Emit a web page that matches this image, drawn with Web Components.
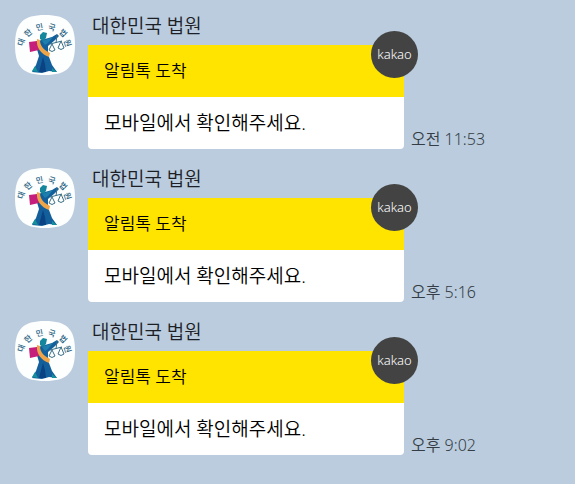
<!DOCTYPE html>
<html lang="ko">
<head>
<meta charset="utf-8">
<meta name="viewport" content="width=device-width, initial-scale=1">
<title>대한민국 법원</title>
<style>
body { margin: 0; background: #baccdd; color: #1c2026; font-family: "Noto Sans", "Noto Sans CJK KR", sans-serif; font-weight: 350; }
</style>
</head>
<body>
<chat-log>
  <chat-message sender="대한민국 법원" time="오전 11:53">
    <notice-card><span slot="heading">알림톡 도착</span>모바일에서 확인해주세요.</notice-card>
  </chat-message>
  <chat-message sender="대한민국 법원" time="오후 5:16">
    <notice-card><span slot="heading">알림톡 도착</span>모바일에서 확인해주세요.</notice-card>
  </chat-message>
  <chat-message sender="대한민국 법원" time="오후 9:02">
    <notice-card><span slot="heading">알림톡 도착</span>모바일에서 확인해주세요.</notice-card>
  </chat-message>
</chat-log>
<script>
function define(name, html, setup) {
  const template = document.createElement('template');
  template.innerHTML = html;
  customElements.define(name, class extends HTMLElement {
    constructor() {
      super();
      this.attachShadow({ mode: 'open' }).append(template.content.cloneNode(true));
    }
    connectedCallback() { if (setup) setup(this); }
  });
}

define('court-avatar', `
<style>
:host { display: block; width: 60px; height: 60px; }
svg { display: block; overflow: visible; }
text { font-size: 8px; font-weight: 500; fill: #24607f; text-anchor: middle; }
</style>
<svg width="60" height="60" viewBox="0 0 60 60" aria-hidden="true">
  <path d="M30 0C52 0 60 8 60 30S52 60 30 60 0 52 0 30 8 0 30 0Z" fill="#fdfefe"/>
  <text transform="translate(9 28) rotate(-72)">대</text>
  <text transform="translate(15 20) rotate(-42)">한</text>
  <text transform="translate(25 15) rotate(-12)">민</text>
  <text transform="translate(36 15) rotate(17)">국</text>
  <text transform="translate(46 20) rotate(45)">법</text>
  <text transform="translate(50 29) rotate(72)">원</text>
  <path d="M23 26 30 24 37 22 42 19 44 21 39 26 33 31 33 36 34 42 37 50 42 57 34 56 27 58 17 57 21 50 24 41 21 31Z" fill="#125f9b"/>
  <path d="M27 26 38 22 33 28 30 30Z" fill="#1f7fac"/>
  <path d="M28 42 24 57 31 57 30 49Z" fill="#0b4283"/>
  <path d="M25 20 28 17 32 18 31 23 28 26 25 24Z" fill="#15879d"/>
  <path d="M14 27 22 26 24 35 15 37Z" fill="#c51e7b"/>
  <path d="M22 24 25 25C25 31 29 35 35 38L34 42C26 39 21 33 22 24Z" fill="#efa448"/>
  <path d="M17 56 20 51 23 57M37 53 42 57 37 57Z" fill="#148f9b"/>
  <g fill="none" stroke="#397087" stroke-width="1">
    <path d="M42 20 41 28M35 29 47 26M37 29 34 35M37 29 40 35M46 26 43 33M46 26 49 33"/>
    <path d="M34 35Q37 38 40 35M43 33Q46 36 49 33"/>
  </g>
</svg>`);

define('kakao-badge', `
<style>
:host { display: grid; place-items: center; width: 47px; height: 47px; border-radius: 50%; background: #434343; color: #fff; font: 350 13px/20px "Noto Sans", sans-serif; }
span { padding-bottom: 2px; }
</style>
<span>kakao</span>`);

define('notice-card', `
<style>
:host { display: block; position: relative; flex: 0 1 316px; min-width: 0; border-radius: 4px; background: #fff; color: #000; font-size: 19px; line-height: 28px; }
header { padding: 12px 16px; background: #ffe400; font-size: 17px; line-height: 28px; }
p { margin: 0; padding: 12px 16px; }
kakao-badge { position: absolute; top: -14px; right: -14px; }
</style>
<header><slot name="heading"></slot></header>
<p><slot></slot></p>
<kakao-badge></kakao-badge>`);

define('chat-message', `
<style>
:host { display: flex; align-items: flex-start; gap: 13px; }
court-avatar { flex: none; }
.body { flex: 1; min-width: 0; }
.name { padding: 0 0 8px 4px; font-size: 19px; line-height: 22px; }
.line { display: flex; align-items: flex-end; gap: 7px; }
time { flex: none; font-size: 16px; line-height: 20px; white-space: nowrap; color: #343d46; }
</style>
<court-avatar></court-avatar>
<div class="body">
  <div class="name"></div>
  <div class="line"><slot></slot><time></time></div>
</div>`, el => {
  el.shadowRoot.querySelector('.name').textContent = el.getAttribute('sender');
  el.shadowRoot.querySelector('time').textContent = el.getAttribute('time');
});

define('chat-log', `
<style>
:host { display: flex; flex-direction: column; gap: 19px; padding: 15px 15px 29px; }
</style>
<slot></slot>`);
</script>
</body>
</html>
